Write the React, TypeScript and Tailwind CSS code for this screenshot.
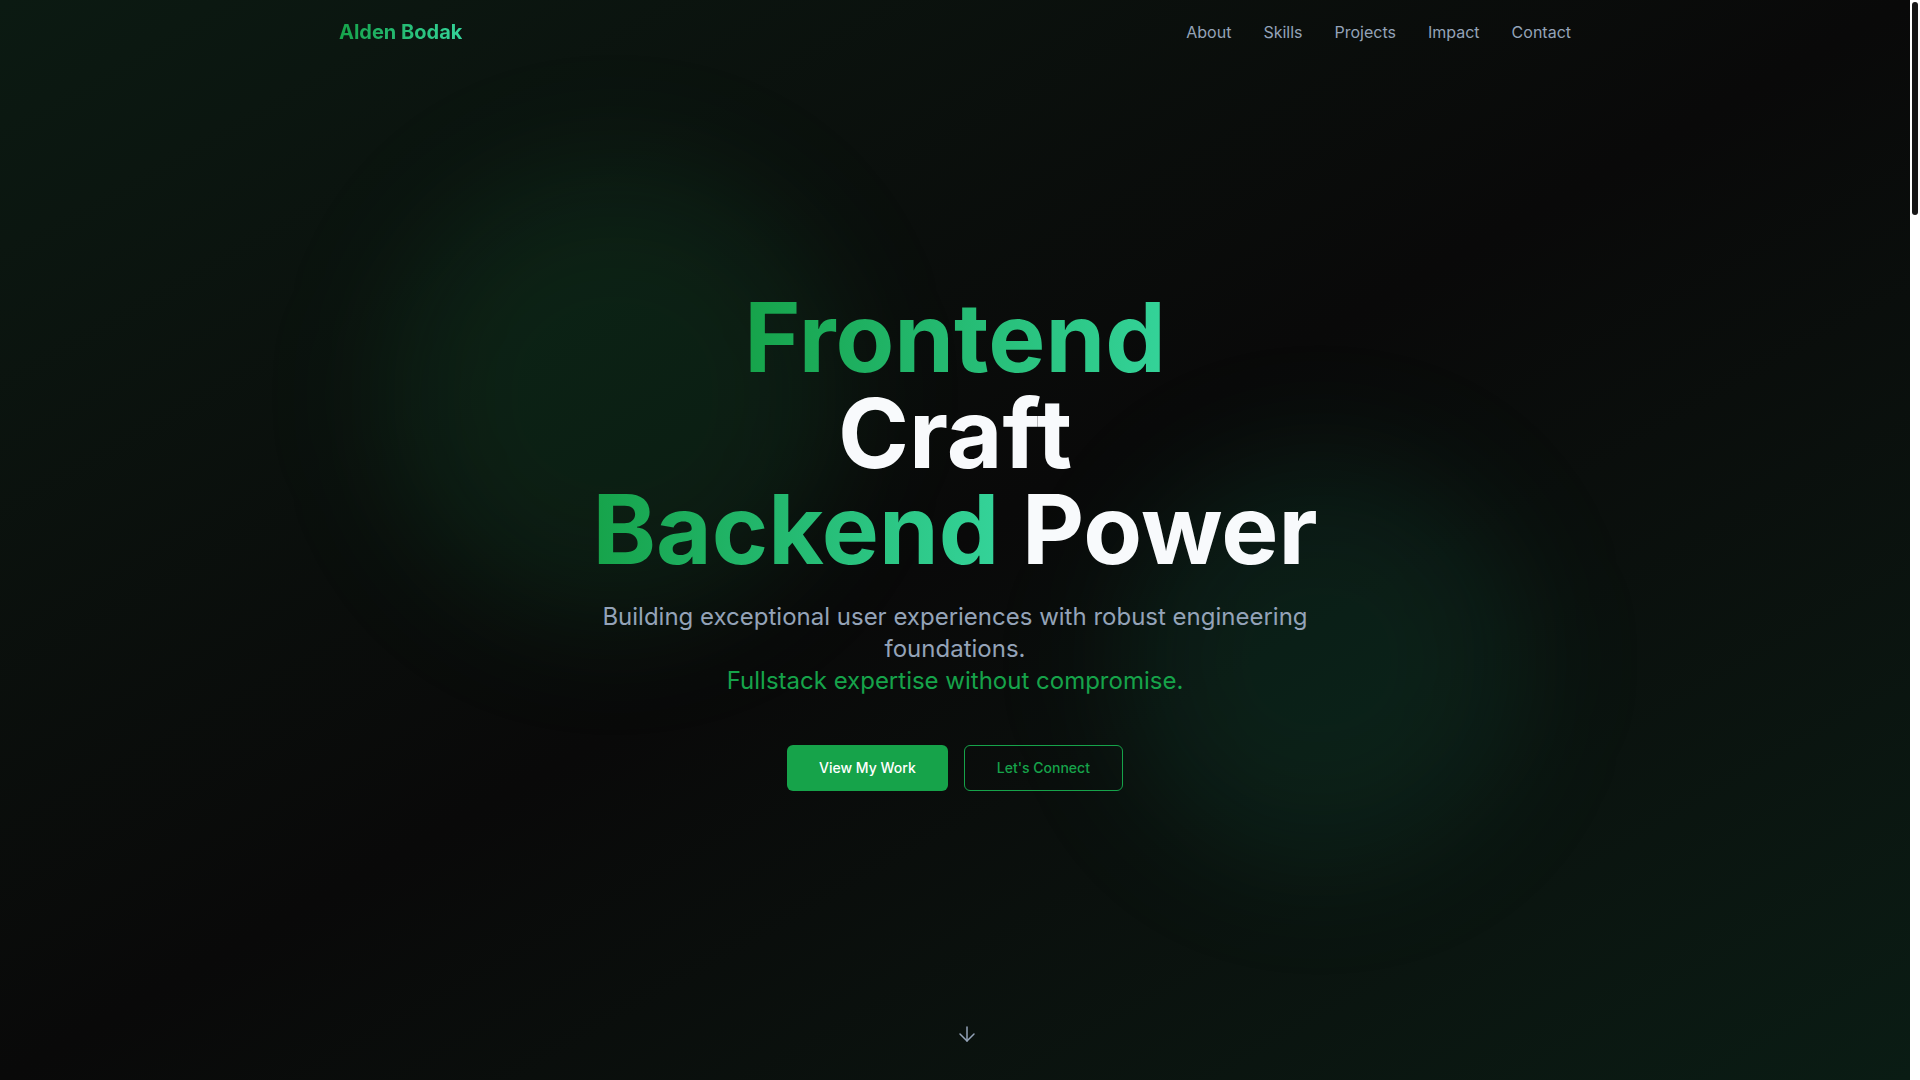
import { ArrowDown } from 'lucide-react';

const links = ['About', 'Skills', 'Projects', 'Impact', 'Contact'];

export default function App() {
  return (
    <div className="flex h-screen bg-[#0a0a0a] font-['Inter',sans-serif] text-white">
      <main className="flex-1 overflow-y-auto [scrollbar-width:none]">
        {/* Hero */}
        <section className="relative h-screen overflow-hidden bg-gradient-to-br from-[#0b1a12] via-[#090909] to-[#0a1c14]">
          <div className="absolute left-[390px] top-[170px] w-[450px] h-[450px] rounded-full bg-[#22c55e]/10 blur-3xl" />
          <div className="absolute left-[1120px] top-[460px] w-[400px] h-[400px] rounded-full bg-[#10b981]/10 blur-3xl" />

          <nav className="absolute top-0 inset-x-0 z-10">
            <div className="max-w-7xl mx-auto px-6 h-16 flex items-center justify-between">
              <a className="text-xl font-bold bg-gradient-to-r from-[#16a34a] to-[#34d399] bg-clip-text text-transparent">
                Alden Bodak
              </a>
              <div className="flex items-center gap-8">
                {links.map((l) => (
                  <a key={l} className="text-base text-[#94a3b8] hover:text-white">
                    {l}
                  </a>
                ))}
              </div>
            </div>
          </nav>

          <div className="relative h-full flex flex-col items-center justify-center text-center px-6">
            <h1 className="text-8xl font-bold leading-none mb-6">
              <span className="block">
                <span className="bg-gradient-to-r from-[#16a34a] to-[#34d399] bg-clip-text text-transparent">Frontend</span>
              </span>
              <span className="block text-[#f8fafc]">Craft</span>
              <span className="block">
                <span className="bg-gradient-to-r from-[#16a34a] to-[#34d399] bg-clip-text text-transparent">Backend</span>{' '}
                <span className="text-[#f8fafc]">Power</span>
              </span>
            </h1>
            <p className="text-2xl leading-8 text-[#94a3b8] max-w-3xl mb-12">
              Building exceptional user experiences with robust engineering foundations.
              <span className="block text-[#16a34a]">Fullstack expertise without compromise.</span>
            </p>
            <div className="flex gap-4">
              <button className="px-8 py-3 rounded-md bg-[#16a34a] text-sm font-medium text-white">
                View My Work
              </button>
              <button className="px-8 py-3 rounded-md border border-[#16a34a] text-sm font-medium text-[#16a34a]">
                Let's Connect
              </button>
            </div>
          </div>

          <div className="absolute left-1/2 bottom-[34px] text-[#94a3b8]">
            <ArrowDown size={24} strokeWidth={1.5} />
          </div>
        </section>

        {/* About */}
        <section className="min-h-[860px] max-w-7xl mx-auto px-6 py-24">
          <h2 className="text-4xl font-bold mb-8">About</h2>
          <p className="text-lg text-[#94a3b8] max-w-3xl leading-relaxed">
            I design and build products end to end, from pixel-perfect interfaces to reliable services and data layers.
          </p>
        </section>

        {/* Skills */}
        <section className="min-h-[860px] max-w-7xl mx-auto px-6 py-24">
          <h2 className="text-4xl font-bold mb-8">Skills</h2>
          <div className="grid grid-cols-3 gap-6">
            {['Frontend', 'Backend', 'Infrastructure'].map((s) => (
              <div key={s} className="p-6 rounded-xl border border-white/10 bg-white/5">
                <h3 className="text-xl font-semibold text-[#34d399]">{s}</h3>
              </div>
            ))}
          </div>
        </section>

        {/* Projects */}
        <section className="min-h-[860px] max-w-7xl mx-auto px-6 py-24">
          <h2 className="text-4xl font-bold mb-8">Projects</h2>
        </section>

        {/* Impact */}
        <section className="min-h-[860px] max-w-7xl mx-auto px-6 py-24">
          <h2 className="text-4xl font-bold mb-8">Impact</h2>
        </section>

        {/* Contact */}
        <section className="min-h-[860px] max-w-7xl mx-auto px-6 py-24">
          <h2 className="text-4xl font-bold mb-8">Contact</h2>
        </section>
      </main>

      {/* scrollbar track */}
      <div className="w-[10px] shrink-0 bg-white px-[2px] pt-[2px]">
        <div className="h-[213px] rounded-full bg-[#161616]" />
      </div>
    </div>
  );
}
